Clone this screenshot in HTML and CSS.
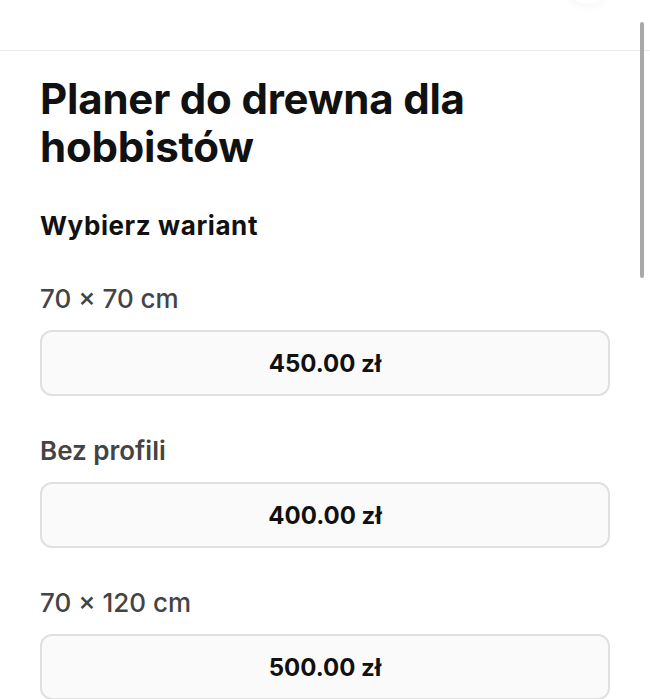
FILE: index.html
```html
<!DOCTYPE html>
<html lang="pl">

<head>
    <meta charset="UTF-8">
    <meta name="viewport" content="width=device-width, initial-scale=1.0">
    <title>Planer do drewna dla hobbistów</title>
    <link rel="stylesheet" href="styles.css">
</head>

<body>
    <header class="top-bar">
        <div class="top-bar-btn"></div>
    </header>
    <main class="product">
        <h1>Planer do drewna dla hobbistów</h1>
        <h2>Wybierz wariant</h2>
        <div class="variant">
            <div class="variant-label">70 × 70 cm</div>
            <button class="variant-btn">450.00 zł</button>
        </div>
        <div class="variant">
            <div class="variant-label strong">Bez profili</div>
            <button class="variant-btn">400.00 zł</button>
        </div>
        <div class="variant">
            <div class="variant-label">70 × 120 cm</div>
            <button class="variant-btn">500.00 zł</button>
        </div>
    </main>
    <div class="scroll-thumb"></div>
</body>

</html>
```

FILE: styles.css
```css
html {
    overflow: hidden;
}

body {
    margin: 0;
    font-family: Inter, "Liberation Sans", Arial, sans-serif;
    background-color: #fff;
    color: #111;
}

.top-bar {
    position: relative;
    height: 50px;
    border-bottom: 1px solid #ececec;
    overflow: hidden;
}

.top-bar-btn {
    position: absolute;
    top: -42px;
    right: 40px;
    width: 46px;
    height: 46px;
    border-radius: 50%;
    background-color: #fff;
    box-shadow: 0 4px 8px rgba(0, 0, 0, 0.03);
}

.product {
    padding: 24px 40px 0;
}

.product h1 {
    margin: 0;
    font-size: 42px;
    line-height: 48px;
    font-weight: 700;
    letter-spacing: -0.2px;
}

.product h2 {
    margin: 39px 0 41px;
    font-size: 26px;
    line-height: 32px;
    font-weight: 700;
    letter-spacing: 0.6px;
}

.variant {
    display: flex;
    flex-direction: column;
    gap: 15px;
    margin-bottom: 39px;
}

.variant-label {
    font-size: 26px;
    line-height: 32px;
    font-weight: 500;
    color: #444;
}

.variant-label.strong {
    font-weight: 600;
}

.variant-btn {
    height: 66px;
    width: 100%;
    border: 2px solid #e0e0e0;
    border-radius: 12px;
    background-color: #fafafa;
    font-family: inherit;
    font-size: 24px;
    font-weight: 700;
    color: #111;
    cursor: pointer;
}

.scroll-thumb {
    position: fixed;
    top: 22px;
    right: 6px;
    width: 4px;
    height: 256px;
    border-radius: 2px;
    background-color: #a9a9a9;
}
```
